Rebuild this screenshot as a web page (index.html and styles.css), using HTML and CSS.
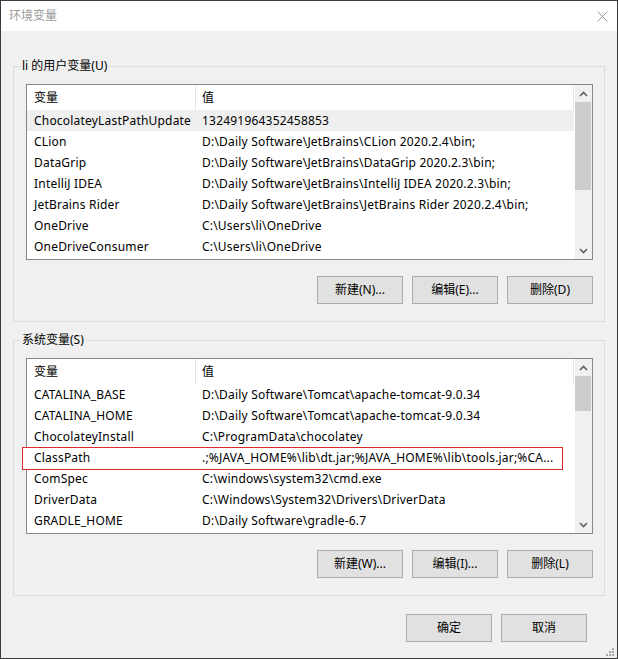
FILE: index.html
```html
<!DOCTYPE html>
<html>
<head>
<meta charset="utf-8">
<title>环境变量</title>
<link rel="stylesheet" href="styles.css">
</head>
<body>
<div class="window">
  <div class="titlebar">
    <span class="title">环境变量</span>
    <svg class="close" width="11" height="11" viewBox="0 0 11 11"><path d="M0.5 0.5 L10.5 10.5 M10.5 0.5 L0.5 10.5" stroke="#9a9a9a" stroke-width="1" fill="none"/></svg>
  </div>
  <div class="content">
    <fieldset class="group">
      <legend>li 的用户变量(U)</legend>
      <div class="list">
        <div class="list-main">
          <div class="list-header"><div class="col col-name">变量</div><div class="col col-value">值</div></div>
          <div class="row selected"><div class="col col-name">ChocolateyLastPathUpdate</div><div class="col col-value">132491964352458853</div></div>
          <div class="row"><div class="col col-name">CLion</div><div class="col col-value">D:\Daily Software\JetBrains\CLion 2020.2.4\bin;</div></div>
          <div class="row"><div class="col col-name">DataGrip</div><div class="col col-value">D:\Daily Software\JetBrains\DataGrip 2020.2.3\bin;</div></div>
          <div class="row"><div class="col col-name">IntelliJ IDEA</div><div class="col col-value">D:\Daily Software\JetBrains\IntelliJ IDEA 2020.2.3\bin;</div></div>
          <div class="row"><div class="col col-name">JetBrains Rider</div><div class="col col-value">D:\Daily Software\JetBrains\JetBrains Rider 2020.2.4\bin;</div></div>
          <div class="row"><div class="col col-name">OneDrive</div><div class="col col-value">C:\Users\li\OneDrive</div></div>
          <div class="row"><div class="col col-name">OneDriveConsumer</div><div class="col col-value">C:\Users\li\OneDrive</div></div>
        </div>
        <div class="scrollbar">
          <div class="sb-btn"><svg width="9" height="6" viewBox="0 0 9 6"><path d="M1 5 L4.5 1.5 L8 5" stroke="#606060" stroke-width="1.6" fill="none"/></svg></div>
          <div class="sb-track"><div class="sb-thumb thumb-user"></div></div>
          <div class="sb-btn"><svg width="9" height="6" viewBox="0 0 9 6"><path d="M1 1 L4.5 4.5 L8 1" stroke="#606060" stroke-width="1.6" fill="none"/></svg></div>
        </div>
      </div>
      <div class="buttons">
        <button class="btn">新建(N)...</button>
        <button class="btn">编辑(E)...</button>
        <button class="btn">删除(D)</button>
      </div>
    </fieldset>

    <fieldset class="group group-system">
      <legend>系统变量(S)</legend>
      <div class="list">
        <div class="list-main">
          <div class="list-header"><div class="col col-name">变量</div><div class="col col-value">值</div></div>
          <div class="row"><div class="col col-name">CATALINA_BASE</div><div class="col col-value">D:\Daily Software\Tomcat\apache-tomcat-9.0.34</div></div>
          <div class="row"><div class="col col-name">CATALINA_HOME</div><div class="col col-value">D:\Daily Software\Tomcat\apache-tomcat-9.0.34</div></div>
          <div class="row"><div class="col col-name">ChocolateyInstall</div><div class="col col-value">C:\ProgramData\chocolatey</div></div>
          <div class="row marked"><span class="mark"></span><div class="col col-name">ClassPath</div><div class="col col-value">.;%JAVA_HOME%\lib\dt.jar;%JAVA_HOME%\lib\tools.jar;%CA...</div></div>
          <div class="row"><div class="col col-name">ComSpec</div><div class="col col-value">C:\windows\system32\cmd.exe</div></div>
          <div class="row"><div class="col col-name">DriverData</div><div class="col col-value">C:\Windows\System32\Drivers\DriverData</div></div>
          <div class="row"><div class="col col-name">GRADLE_HOME</div><div class="col col-value">D:\Daily Software\gradle-6.7</div></div>
        </div>
        <div class="scrollbar">
          <div class="sb-btn"><svg width="9" height="6" viewBox="0 0 9 6"><path d="M1 5 L4.5 1.5 L8 5" stroke="#606060" stroke-width="1.6" fill="none"/></svg></div>
          <div class="sb-track"><div class="sb-thumb thumb-system"></div></div>
          <div class="sb-btn"><svg width="9" height="6" viewBox="0 0 9 6"><path d="M1 1 L4.5 4.5 L8 1" stroke="#606060" stroke-width="1.6" fill="none"/></svg></div>
        </div>
      </div>
      <div class="buttons">
        <button class="btn">新建(W)...</button>
        <button class="btn">编辑(I)...</button>
        <button class="btn">删除(L)</button>
      </div>
    </fieldset>

    <div class="dialog-buttons">
      <button class="btn">确定</button>
      <button class="btn">取消</button>
    </div>
  </div>
  <svg class="grip" width="8" height="8" viewBox="0 0 8 8">
    <rect x="6" y="0" width="2" height="2" fill="#a8a8a8"/>
    <rect x="3" y="3" width="2" height="2" fill="#a8a8a8"/>
    <rect x="6" y="3" width="2" height="2" fill="#a8a8a8"/>
    <rect x="0" y="6" width="2" height="2" fill="#a8a8a8"/>
    <rect x="3" y="6" width="2" height="2" fill="#a8a8a8"/>
    <rect x="6" y="6" width="2" height="2" fill="#a8a8a8"/>
  </svg>
</div>
</body>
</html>
```
FILE: styles.css
```css
* { box-sizing: border-box; }
html, body { margin: 0; padding: 0; }
body {
  font-family: "Microsoft YaHei UI", "Noto Sans", "Noto Sans CJK SC", sans-serif;
  font-size: 12px;
  color: #000;
  background: #fff;
}
.window {
  position: relative;
  width: 618px;
  height: 659px;
  border: 1px solid #3b3b3b;
  background: #f0f0f0;
  display: flex;
  flex-direction: column;
}
.titlebar {
  height: 30px;
  flex: none;
  background: #fff;
  display: flex;
  align-items: center;
  justify-content: space-between;
  padding: 0 9px 0 8px;
}
.title { color: #9a9a9a; line-height: 16px; }
.close { display: block; }
.content {
  flex: 1;
  padding: 0 12px;
  display: flex;
  flex-direction: column;
}
.group {
  margin: 27px 0 0;
  padding: 10px 11px 17px 12px;
  border: 1px solid #dcdcdc;
  min-width: 0;
}
.group-system { margin-top: 10px; }
.group legend {
  padding: 0 2px;
  margin-left: -6px;
  line-height: 16px;
}
.list {
  height: 176px;
  border: 1px solid #828790;
  background: #fff;
  display: flex;
}
.list-main {
  flex: 1;
  min-width: 0;
  margin-right: 1px;
  display: flex;
  flex-direction: column;
}
.list-header { height: 25px; display: flex; flex: none; }
.list-header .col { border-right: 1px solid #e5e5e5; line-height: 25px; }
.row {
  position: relative;
  height: 21px;
  flex: none;
  display: flex;
  line-height: 21px;
  white-space: nowrap;
  letter-spacing: 0.2px;
}
.row.selected { background: #efefef; }
.col { white-space: nowrap; overflow: hidden; }
.col-name { width: 169px; flex: none; padding-left: 7px; }
.col-value { flex: 1; min-width: 0; padding-left: 6px; }
.row.marked .col { position: relative; z-index: 1; }
.mark {
  position: absolute;
  left: -5px;
  top: 0;
  width: 541px;
  height: 23px;
  border: 1px solid #dc2a2f;
  background: #fff;
}
.scrollbar {
  width: 17px;
  flex: none;
  background: #f0f0f0;
  display: flex;
  flex-direction: column;
}
.sb-btn {
  height: 17px;
  flex: none;
  display: flex;
  align-items: center;
  justify-content: center;
}
.sb-btn svg { display: block; }
.sb-track { flex: 1; }
.sb-thumb { background: #cdcdcd; margin-right: 1px; }
.thumb-user { height: 88px; }
.thumb-system { height: 35px; }
.buttons {
  display: flex;
  justify-content: flex-end;
  gap: 9px;
  margin-top: 16px;
}
.btn {
  width: 86px;
  height: 28px;
  padding: 0;
  border: 1px solid #adadad;
  background: #e1e1e1;
  font: inherit;
  color: #000;
  line-height: 26px;
  text-align: center;
}
.dialog-buttons {
  display: flex;
  justify-content: flex-end;
  gap: 9px;
  margin-top: 18px;
  padding-right: 18px;
}
.grip {
  position: absolute;
  right: 3px;
  bottom: 2px;
  display: block;
}
```
